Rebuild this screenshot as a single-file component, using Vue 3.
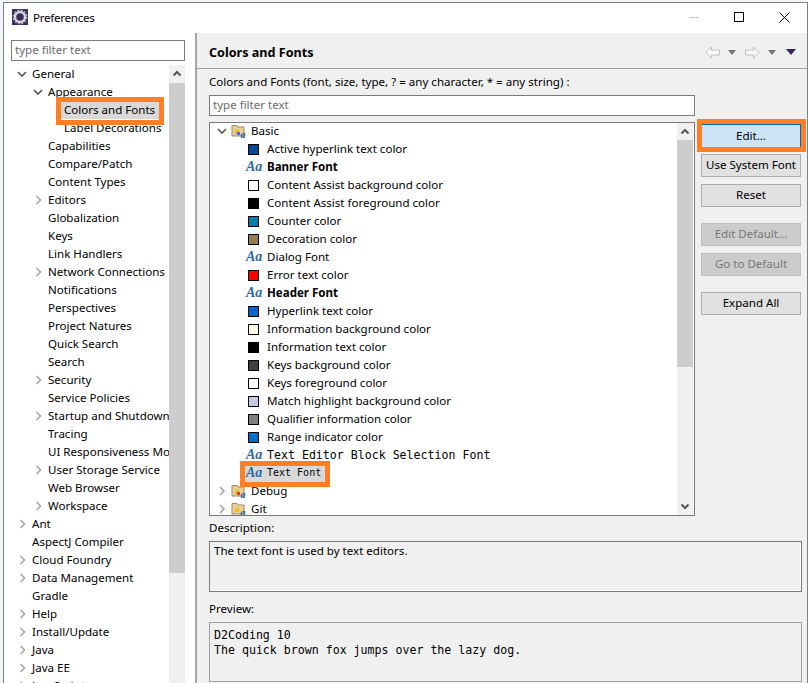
<script setup>
const leftRows = [
  ['General', 1, 'down'], ['Appearance', 2, 'down'], ['Colors and Fonts', 3, '', 'sel'], ['Label Decorations', 3, ''],
  ['Capabilities', 2, ''], ['Compare/Patch', 2, ''], ['Content Types', 2, ''], ['Editors', 2, 'right'],
  ['Globalization', 2, ''], ['Keys', 2, ''], ['Link Handlers', 2, ''], ['Network Connections', 2, 'right'],
  ['Notifications', 2, ''], ['Perspectives', 2, ''], ['Project Natures', 2, ''], ['Quick Search', 2, ''],
  ['Search', 2, ''], ['Security', 2, 'right'], ['Service Policies', 2, ''], ['Startup and Shutdown', 2, 'right'],
  ['Tracing', 2, ''], ['UI Responsiveness Monitoring', 2, ''], ['User Storage Service', 2, 'right'], ['Web Browser', 2, ''],
  ['Workspace', 2, 'right'], ['Ant', 1, 'right'], ['AspectJ Compiler', 1, ''], ['Cloud Foundry', 1, 'right'],
  ['Data Management', 1, 'right'], ['Gradle', 1, ''], ['Help', 1, 'right'], ['Install/Update', 1, 'right'],
  ['Java', 1, 'right'], ['Java EE', 1, 'right'], ['JavaScript', 1, 'right']
].map(([label, level, arrow, sel]) => ({ label, level, arrow, sel, pad: 6 + (level - 1) * 16 }))

const colorRows = [
  { label: 'Active hyperlink text color', color: '#004a94' },
  { label: 'Banner Font', font: 'bold' },
  { label: 'Content Assist background color', color: '#ffffff' },
  { label: 'Content Assist foreground color', color: '#000000' },
  { label: 'Counter color', color: '#0080ab' },
  { label: 'Decoration color', color: '#957d47' },
  { label: 'Dialog Font', font: 'plain' },
  { label: 'Error text color', color: '#ff0000' },
  { label: 'Header Font', font: 'bold' },
  { label: 'Hyperlink text color', color: '#0066cc' },
  { label: 'Information background color', color: '#ffffe1' },
  { label: 'Information text color', color: '#000000' },
  { label: 'Keys background color', color: '#404040' },
  { label: 'Keys foreground color', color: '#ffffff' },
  { label: 'Match highlight background color', color: '#c8c8e6' },
  { label: 'Qualifier information color', color: '#808080' },
  { label: 'Range indicator color', color: '#0070cc' },
  { label: 'Text Editor Block Selection Font', font: 'mono' },
  { label: 'Text Font', font: 'mono small', sel: true }
]

const buttons = [
  { label: 'Edit...', cls: 'primary' },
  { label: 'Use System Font', cls: 'second' },
  { label: 'Reset', cls: 'third' },
  { label: 'Edit Default...', cls: 'fourth', off: true },
  { label: 'Go to Default', cls: 'fifth', off: true },
  { label: 'Expand All', cls: 'sixth' }
]
</script>

<template>
  <div class="page">
    <div class="window">
      <header class="titlebar">
        <svg class="appicon" width="16" height="16" viewBox="0 0 16 16">
          <rect width="16" height="16" fill="#3c2f5c" />
          <circle cx="8" cy="8" r="5" fill="none" stroke="#d8d8e0" stroke-width="2.4" />
          <circle cx="8" cy="8" r="6.8" fill="none" stroke="#b8b8c8" stroke-width="1.2" stroke-dasharray="2 1.6" />
        </svg>
        <span class="wintitle">Preferences</span>
        <div class="controls">
          <svg width="10" height="10" viewBox="0 0 10 10"><path d="M0 5.5h10" stroke="#c4c4c4" /></svg>
          <svg width="10" height="10" viewBox="0 0 10 10"><rect x=".5" y=".5" width="9" height="9" fill="none" stroke="#000" /></svg>
          <svg width="11" height="11" viewBox="0 0 11 11"><path d="M.5.5l10 10M10.5.5l-10 10" stroke="#000" /></svg>
        </div>
      </header>

      <div class="body">
        <aside class="left">
          <div class="filter left-filter">type filter text</div>
          <div class="left-tree">
            <div class="left-rows">
              <div v-for="r in leftRows" :key="r.label" class="lrow" :class="{ rowsel: r.sel }" :style="{ paddingLeft: r.pad + 'px' }">
                <span class="arrowbox">
                  <svg v-if="r.arrow === 'down'" width="10" height="7" viewBox="0 0 10 7"><path d="M1 1l4 4 4-4" fill="none" stroke="#555" stroke-width="1.6" /></svg>
                  <svg v-else-if="r.arrow === 'right'" class="rchev" width="7" height="10" viewBox="0 0 7 10"><path d="M1.5 1l4 4-4 4" fill="none" stroke="#a6a6a6" stroke-width="1.6" /></svg>
                </span>
                <span class="ltext">{{ r.label }}</span>
              </div>
            </div>
            <div class="scroll left-scroll">
              <svg class="sarrow" width="16" height="17" viewBox="0 0 16 17"><path d="M4.5 10.5L8 7l3.500 3.500" fill="none" stroke="#555" stroke-width="2" /></svg>
              <div class="thumb left-thumb"></div>
            </div>
          </div>
        </aside>

        <main class="right">
          <div class="head">
            <span class="headtitle">Colors and Fonts</span>
            <div class="nav">
              <svg width="15" height="13" viewBox="0 0 15 13"><path d="M.8 6.500L6.500 1v3h8v5h-8v3z" fill="#fafafa" stroke="#c0c0c0" /></svg>
              <svg class="tri" width="8" height="5" viewBox="0 0 8 5"><path d="M0 0h8L4 5z" fill="#777" /></svg>
              <svg class="fwd" width="15" height="13" viewBox="0 0 15 13"><path d="M14.200 6.500L8.500 1v3h-8v5h8v3z" fill="#fafafa" stroke="#c0c0c0" /></svg>
              <svg class="tri" width="8" height="5" viewBox="0 0 8 5"><path d="M0 0h8L4 5z" fill="#777" /></svg>
              <svg class="menu" width="10" height="6" viewBox="0 0 10 6"><path d="M0 0h10L5 6z" fill="#35245c" /></svg>
            </div>
          </div>

          <div class="content">
            <div class="label first">Colors and Fonts (font, size, type, ? = any character, * = any string) :</div>
            <div class="filter right-filter">type filter text</div>

            <div class="split">
              <div class="ctree">
                <div class="crows">
                  <div class="crow group">
                    <svg class="carrow" width="10" height="7" viewBox="0 0 10 7"><path d="M1 1l4 4 4-4" fill="none" stroke="#555" stroke-width="1.6" /></svg>
                    <svg class="folder" width="16" height="15" viewBox="0 0 16 15">
                      <path d="M1 3V1.500h5L7 3h6v9H1z" fill="#e8cf9a" stroke="#a08a60" />
                      <rect x="4" y="6" width="4" height="4" fill="#e8c020" /><rect x="6" y="8" width="3" height="3" fill="#4070c0" />
                      <text x="9.500" y="14" class="fa">a</text>
                    </svg>
                    <span>Basic</span>
                  </div>
                  <div v-for="c in colorRows" :key="c.label" class="crow item" :class="{ rowsel2: c.sel }">
                    <span v-if="c.color" class="swatch" :style="{ background: c.color }"></span>
                    <span v-else class="aa">Aa</span>
                    <span class="clabel" :class="c.font">{{ c.label }}</span>
                  </div>
                  <div class="crow group">
                    <svg class="carrow" width="7" height="10" viewBox="0 0 7 10"><path d="M1.500 1l4 4-4 4" fill="none" stroke="#a6a6a6" stroke-width="1.6" /></svg>
                    <svg class="folder" width="16" height="15" viewBox="0 0 16 15">
                      <path d="M1 3V1.500h5L7 3h6v9H1z" fill="#e8cf9a" stroke="#a08a60" />
                      <rect x="4" y="6" width="4" height="4" fill="#e8c020" /><rect x="6" y="8" width="3" height="3" fill="#d04020" />
                      <text x="9.500" y="14" class="fa">a</text>
                    </svg>
                    <span>Debug</span>
                  </div>
                  <div class="crow group">
                    <svg class="carrow" width="7" height="10" viewBox="0 0 7 10"><path d="M1.500 1l4 4-4 4" fill="none" stroke="#a6a6a6" stroke-width="1.6" /></svg>
                    <svg class="folder" width="16" height="15" viewBox="0 0 16 15">
                      <path d="M1 3V1.500h5L7 3h6v9H1z" fill="#e8cf9a" stroke="#a08a60" />
                      <rect x="4" y="6" width="4" height="4" fill="#e8c020" />
                      <text x="9.500" y="14" class="fa">a</text>
                    </svg>
                    <span>Git</span>
                  </div>
                </div>
                <div class="scroll right-scroll">
                  <svg class="sarrow" width="16" height="17" viewBox="0 0 16 17"><path d="M4.500 10.500L8 7l3.500 3.500" fill="none" stroke="#555" stroke-width="2" /></svg>
                  <div class="thumb right-thumb"></div>
                  <svg class="sdown" width="16" height="17" viewBox="0 0 16 17"><path d="M4.500 6.500L8 10l3.500-3.500" fill="none" stroke="#555" stroke-width="2" /></svg>
                </div>
              </div>

              <div class="buttons">
                <button v-for="b in buttons" :key="b.label" class="btn" :class="[b.cls, { off: b.off }]">{{ b.label }}</button>
              </div>
            </div>

            <div class="label desc">Description:</div>
            <div class="descbox">The text font is used by text editors.</div>
            <div class="label prev">Preview:</div>
            <div class="prevbox">D2Coding 10<br />The quick brown fox jumps over the lazy dog.</div>
          </div>
        </main>
      </div>
    </div>

    <div class="mark mark-colors"></div>
    <div class="mark mark-text"></div>
    <div class="mark mark-edit"></div>
  </div>
</template>

<style scoped>
.page {
  position: relative;
  width: 808px;
  height: 683px;
  overflow: hidden;
  background: #f4f5f9;
  font-family: "Noto Sans", "Noto Sans CJK KR", sans-serif;
  font-size: 11.55px;
  color: #000;
}
.window {
  box-sizing: border-box;
  margin: 2px 0 0 3px;
  width: 805px;
  height: 681px;
  border: 1px solid #7a828c;
  border-bottom: none;
  background: #fff;
  display: flex;
  flex-direction: column;
}
.titlebar {
  flex: none;
  box-sizing: border-box;
  height: 30px;
  padding: 0 0 2px 8px;
  display: flex;
  align-items: center;
}
.appicon { flex: none; }
.wintitle { margin-left: 5px; letter-spacing: -0.25px; }
.controls {
  margin-left: auto;
  display: flex;
  align-items: center;
  gap: 35px;
  padding-right: 17px;
}
.body {
  flex: 1;
  min-height: 0;
  display: flex;
}
.left {
  flex: none;
  width: 191px;
  padding: 7px 0 0 7px;
  box-sizing: border-box;
  overflow: hidden;
}
.filter {
  box-sizing: border-box;
  height: 21px;
  line-height: 17px;
  padding-left: 3px;
  border: 1px solid #7a7a7a;
  background: #fff;
  color: #6d6d6d;
}
.left-filter { width: 174px; }
.left-tree {
  display: flex;
  width: 174px;
  margin-top: 4px;
  height: 620px;
}
.left-rows {
  flex: none;
  width: 158px;
  overflow: hidden;
}
.lrow {
  height: 18px;
  display: flex;
  align-items: center;
  line-height: 18px;
  white-space: nowrap;
}
.rowsel {
  background: linear-gradient(#d9d9d9, #d9d9d9) 50px 0 / 98px 100% no-repeat;
}
.arrowbox {
  flex: none;
  width: 15px;
  display: flex;
  align-items: center;
}
.rchev { margin-left: 2px; }
.ltext { flex: none; }
.scroll {
  flex: none;
  position: relative;
  width: 16px;
  background: #f0f0f0;
}
.sarrow, .sdown { display: block; }
.thumb { background: #cdcdcd; }
.left-scroll { height: 620px; }
.left-thumb { height: 490px; margin-top: 1px; }
.right {
  flex: 1;
  min-width: 0;
  border-left: 2px solid #a6a6a6;
  background: #f0f0f0;
  display: flex;
  flex-direction: column;
}
.head {
  flex: none;
  height: 36px;
  box-sizing: border-box;
  border-bottom: 1px solid #a0a0a0;
  display: flex;
  align-items: center;
  padding: 3px 11px 0 12px;
}
.headtitle { font-weight: 700; font-size: 12.6px; }
.nav {
  margin-left: auto;
  display: flex;
  align-items: center;
}
.nav .tri { margin-left: 8px; }
.nav .fwd { margin-left: 9px; }
.nav .menu { margin-left: 10px; }
.content {
  flex: 1;
  min-height: 0;
  padding: 5px 0 0 12px;
}
.label { height: 16px; line-height: 16px; }
.right-filter {
  width: 486px;
  margin-top: 5px;
}
.split {
  display: flex;
  margin-top: 6px;
  height: 394px;
}
.ctree {
  flex: none;
  box-sizing: border-box;
  width: 486px;
  height: 394px;
  border: 1px solid #7a7a7a;
  background: #fff;
  display: flex;
  overflow: hidden;
}
.crows {
  flex: 1;
  min-width: 0;
  margin-top: -1px;
  overflow: hidden;
}
.crow {
  height: 18px;
  line-height: 18px;
  display: flex;
  align-items: center;
  white-space: nowrap;
  position: relative;
}
.group { padding-left: 7px; }
.group .carrow { width: 10px; flex: none; }
.group .folder { margin: 0 4px 0 4px; flex: none; }
.fa {
  font-family: "Liberation Serif", serif;
  font-style: italic;
  font-weight: 700;
  font-size: 10px;
  fill: #1f5aa0;
}
.item { padding-left: 38px; }
.rowsel2 {
  background: linear-gradient(#d9d9d9, #d9d9d9) 35px 0 / 80px 100% no-repeat;
}
.swatch {
  flex: none;
  box-sizing: border-box;
  width: 11px;
  height: 11px;
  border: 1px solid #000;
  margin-right: 8px;
}
.aa {
  flex: none;
  width: 20px;
  margin-left: -2px;
  margin-right: 1px;
  font-family: "Liberation Serif", serif;
  font-style: italic;
  font-weight: 700;
  font-size: 14px;
  color: #2f6aa8;
}
.bold { font-weight: 700; }
.mono {
  font-family: "DejaVu Sans Mono", monospace;
  font-size: 11.6px;
}
.small { font-size: 10px; }
.right-scroll {
  width: 16px;
  margin-right: 1px;
  height: 392px;
}
.right-thumb { height: 227px; }
.sdown {
  position: absolute;
  left: 0;
  bottom: 0;
}
.buttons {
  flex: none;
  width: 100px;
  margin-left: 6px;
  padding-top: 2px;
  display: flex;
  flex-direction: column;
}
.btn {
  box-sizing: border-box;
  width: 100px;
  height: 23px;
  padding: 0 0 2px;
  border: 1px solid #adadad;
  background: #e1e1e1;
  font: inherit;
  color: #000;
}
.primary {
  height: 24px;
  border: 1px solid #0067b0;
  background: #cce4f7;
}
.second { margin-top: 6px; }
.third { margin-top: 7px; }
.fourth { margin-top: 16px; }
.fifth { margin-top: 7px; }
.sixth { margin-top: 16px; }
.off {
  background: #cccccc;
  border-color: #bfbfbf;
  color: #787878;
}
.desc { margin-top: 4px; }
.descbox {
  box-sizing: border-box;
  width: 593px;
  height: 51px;
  margin-top: 5px;
  padding: 1px 0 0 4px;
  border: 1px solid #7a7a7a;
  box-shadow: inset -1px -1px 0 #fff;
  line-height: 16px;
}
.prev { margin-top: 9px; }
.prevbox {
  box-sizing: border-box;
  width: 593px;
  height: 60px;
  margin-top: 5px;
  padding: 5px 0 0 4px;
  border: 1px solid #a0a0a0;
  font-family: "DejaVu Sans Mono", monospace;
  font-size: 11.6px;
  line-height: 15px;
}
.mark {
  position: absolute;
  box-sizing: border-box;
  border: 5px solid #ff7f27;
}
.mark-colors { left: 56px; top: 97px; width: 108px; height: 28px; }
.mark-text { left: 240px; top: 461px; width: 90px; height: 26px; }
.mark-edit { left: 697px; top: 119px; width: 109px; height: 33px; }
</style>

<style>
html, body { margin: 0; padding: 0; overflow: hidden; }
</style>
